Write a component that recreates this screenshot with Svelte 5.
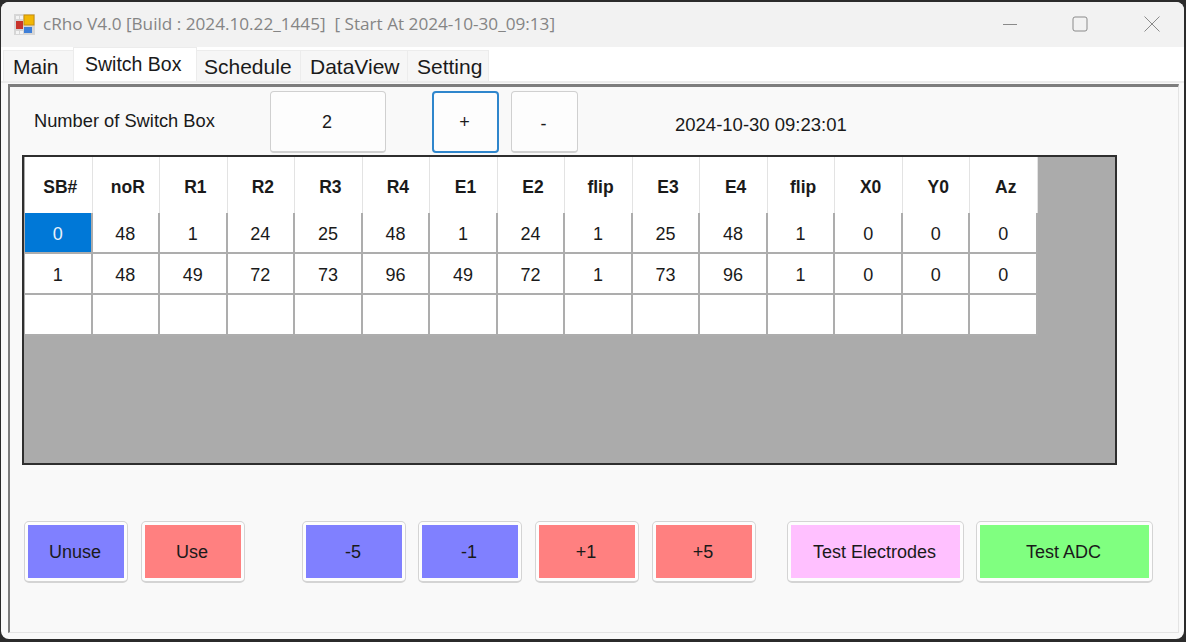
<script>
  const tabs = ["Main", "Switch Box", "Schedule", "DataView", "Setting"];
  const cols = ["SB#", "noR", "R1", "R2", "R3", "R4", "E1", "E2", "flip", "E3", "E4", "flip", "X0", "Y0", "Az"];
  const rows = [
    [0, 48, 1, 24, 25, 48, 1, 24, 1, 25, 48, 1, 0, 0, 0],
    [1, 48, 49, 72, 73, 96, 49, 72, 1, 73, 96, 1, 0, 0, 0],
    ["", "", "", "", "", "", "", "", "", "", "", "", "", "", ""]
  ];
  let count = $state(2);
</script>

<div class="window">
  <header class="titlebar">
    <svg class="appicon" width="21" height="21" viewBox="0 0 21 21">
      <rect width="21" height="21" fill="#d6d6d6" />
      <rect x="10" y="1" width="10" height="10" fill="#f2b705" stroke="#c98f0a" />
      <rect x="2" y="7" width="7" height="8" fill="#c8342c" />
      <rect x="10" y="13" width="8" height="6" fill="#3f7fd8" />
      <rect x="2" y="2" width="3" height="3" fill="#f4f4f4" />
      <rect x="6" y="2" width="3" height="3" fill="#f4f4f4" />
      <rect x="2" y="17" width="3" height="3" fill="#f4f4f4" />
      <rect x="6" y="17" width="3" height="3" fill="#f4f4f4" />
    </svg>
    <span class="title">cRho V4.0 [Build : 2024.10.22_1445]&nbsp; [ Start At 2024-10-30_09:13]</span>
    <div class="controls">
      <svg width="16" height="16" viewBox="0 0 16 16"><path d="M1 8.500h14" stroke="#8a8a8a" fill="none" /></svg>
      <svg width="16" height="16" viewBox="0 0 16 16"><rect x="1" y="1" width="14" height="14" rx="2" stroke="#8a8a8a" fill="none" /></svg>
      <svg width="16" height="16" viewBox="0 0 16 16"><path d="M0.500 0.500l15 15M15.500 0.500l-15 15" stroke="#8a8a8a" fill="none" /></svg>
    </div>
  </header>

  <nav class="tabs">
    {#each tabs as tab, i}
      <div class="tab" class:active={i === 1}>{tab}</div>
    {/each}
  </nav>

  <main class="page">
    <div class="toprow">
      <span class="label">Number of Switch Box</span>
      <button class="btn count">{count}</button>
      <button class="btn plus" onclick={() => count++}>+</button>
      <button class="btn minus" onclick={() => count--}>-</button>
      <span class="date">2024-10-30 09:23:01</span>
    </div>

    <div class="gridview">
      <table>
        <thead>
          <tr>
            {#each cols as c}<th>{c}</th>{/each}
          </tr>
        </thead>
        <tbody>
          {#each rows as row, r}
            <tr>
              {#each row as v, c}
                <td class:sel={r === 0 && c === 0}>{v}</td>
              {/each}
            </tr>
          {/each}
        </tbody>
      </table>
    </div>

    <div class="actions">
      <button class="btn act blue"><span>Unuse</span></button>
      <button class="btn act red g1"><span>Use</span></button>
      <button class="btn act blue g2"><span>-5</span></button>
      <button class="btn act blue g3"><span>-1</span></button>
      <button class="btn act red g1"><span>+1</span></button>
      <button class="btn act red g1"><span>+5</span></button>
      <button class="btn act wide pink g4"><span>Test Electrodes</span></button>
      <button class="btn act wide green g3"><span>Test ADC</span></button>
    </div>
  </main>
</div>

<style>
  :global(body) {
    margin: 0;
    background: #2b2b2b;
    overflow: hidden;
  }

  .window {
    width: 1183px;
    height: 637px;
    margin: 2px 0 0 1px;
    background: #f9f9f9;
    border-radius: 8px;
    overflow: hidden;
    font-family: "Liberation Sans", Arial, sans-serif;
    color: #1a1a1a;
    display: flex;
    flex-direction: column;
  }

  .titlebar {
    height: 45px;
    flex: none;
    background: #f2f2f2;
    display: flex;
    align-items: center;
    padding-left: 13px;
  }
  .appicon {
    margin-top: -1px;
  }
  .title {
    margin-left: 8px;
    margin-top: -3px;
    font-family: "Open Sans", sans-serif;
    font-size: 17.170px;
    color: #858585;
    white-space: pre;
  }
  .controls {
    margin-left: auto;
    display: flex;
    gap: 54px;
    padding-right: 24px;
    margin-top: -1px;
  }
  .controls svg:last-child {
    margin-left: 2px;
  }

  .tabs {
    height: 36px;
    flex: none;
    display: flex;
    align-items: flex-end;
    padding-left: 2px;
    box-sizing: border-box;
    background: #fff;
    border-bottom: 2px solid #ececec;
  }
  .tab {
    height: 31px;
    box-sizing: border-box;
    padding: 4px 0 0 9px;
    font-size: 21px;
    background: #f6f6f6;
    border: 1px solid #ececec;
    border-bottom: none;
    margin-left: -1px;
    white-space: nowrap;
  }
  .tab:first-child {
    margin-left: 0;
    width: 71px;
  }
  .tab:nth-child(3) {
    width: 105px;
    padding-left: 7px;
  }
  .tab:nth-child(4) {
    width: 108px;
  }
  .tab:nth-child(5) {
    width: 82px;
  }
  .tab.active {
    height: 34px;
    width: 124px;
    background: #fff;
    padding: 5px 0 0 11px;
    font-size: 19.500px;
  }

  .page {
    flex: 1;
    margin: 1px 5px 6px 7px;
    background: #f9f9f9;
    border-top: 3px solid #7d7d7d;
    border-left: 2px solid #7d7d7d;
    border-right: 1px solid #e4e4e4;
    border-bottom: 1px solid #e4e4e4;
    box-sizing: border-box;
    padding: 4px 0 0 13px;
  }

  .toprow {
    display: flex;
    align-items: center;
    height: 62px;
  }
  .label {
    width: 247px;
    padding-left: 11px;
    font-size: 18.300px;
    box-sizing: border-box;
    margin-top: -2px;
  }
  .date {
    margin-left: 97px;
    font-size: 18.500px;
    margin-top: 6px;
  }

  .btn {
    font-family: inherit;
    color: #1a1a1a;
    background: #fdfdfd;
    border: 1px solid #d0d0d0;
    border-bottom-width: 2px;
    border-radius: 4px;
    padding: 1px 2px 0 0;
    box-sizing: border-box;
  }
  .count {
    width: 116px;
    height: 62px;
    font-size: 18px;
  }
  .plus {
    width: 67px;
    height: 62px;
    margin-left: 46px;
    font-size: 18px;
    border: 2px solid #2f86cc;
  }
  .minus {
    width: 67px;
    height: 62px;
    margin-left: 12px;
    font-size: 18px;
    padding-top: 5px;
  }

  .gridview {
    width: 1095px;
    height: 310px;
    margin-top: 2px;
    margin-left: -1px;
    box-sizing: border-box;
    border: 2px solid #2e2e2e;
    background: #ababab;
  }
  table {
    table-layout: fixed;
    width: 1013px;
    margin-left: 1px;
    border-collapse: separate;
    border-spacing: 0;
    font-size: 18px;
  }
  th {
    height: 56px;
    padding: 4px 0 0 4px;
    box-sizing: border-box;
    background: #fff;
    border-right: 1px solid #e3e3e3;
    font-size: 17.500px;
    font-weight: bold;
  }
  td {
    height: 41px;
    padding: 3px 0 0;
    text-align: center;
    background: #fff;
    border-right: 2px solid #adadad;
    border-bottom: 2px solid #adadad;
    box-sizing: border-box;
  }
  td.sel {
    background: #0078d7;
    color: #e8f2fb;
  }

  .actions {
    display: flex;
    margin-top: 56px;
    margin-left: 1px;
  }
  .act {
    width: 104px;
    height: 62px;
    font-size: 18px;
    border: 1px solid #d4d4d4;
    border-bottom-width: 2px;
    border-radius: 5px;
    padding: 3px;
    background: #fdfdfd;
  }
  .act span {
    display: flex;
    height: 100%;
    align-items: center;
    justify-content: center;
    padding: 2px 2px 0 0;
    box-sizing: border-box;
  }
  .wide {
    width: 177px;
  }
  .blue span { background-color: #8080ff; }
  .red span { background-color: #ff8080; }
  .pink span { background-color: #ffc0ff; }
  .green span { background-color: #80ff80; }
  .g1 { margin-left: 13px; }
  .g2 { margin-left: 57px; }
  .g3 { margin-left: 12px; }
  .g4 { margin-left: 31px; }
</style>
